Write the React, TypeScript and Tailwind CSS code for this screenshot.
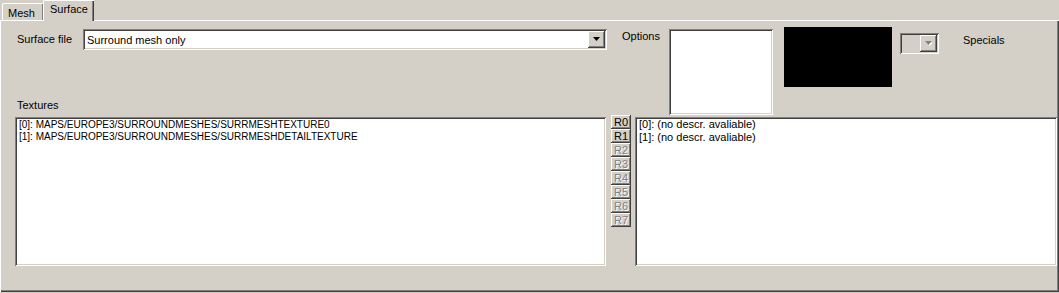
const raised =
  "shadow-[inset_-1px_-1px_#404040,inset_1px_1px_#ffffff,inset_-2px_-2px_#808080,inset_2px_2px_#d4d0c8]";
const sunken =
  "shadow-[inset_1px_1px_#808080,inset_-1px_-1px_#ffffff,inset_2px_2px_#404040,inset_-2px_-2px_#d4d0c8]";

const Arrow = ({ disabled }: { disabled?: boolean }) => (
  <svg width="7" height="5" viewBox="0 0 7 5">
    {disabled && <path d="M1 1h7L4.5 5z" fill="#ffffff" />}
    <path d="M0 0h7L3.5 4z" fill={disabled ? "#808080" : "#000000"} />
  </svg>
);

const textures = [
  "[0]: MAPS/EUROPE3/SURROUNDMESHES/SURRMESHTEXTURE0",
  "[1]: MAPS/EUROPE3/SURROUNDMESHES/SURRMESHDETAILTEXTURE",
];
const descr = ["[0]: (no descr. avaliable)", "[1]: (no descr. avaliable)"];
const regs = ["R0", "R1", "R2", "R3", "R4", "R5", "R6", "R7"];

export default function App() {
  return (
    <div className="w-[1059px] h-[293px] bg-[#d4d0c8] flex flex-col font-['Liberation_Sans',Arial,sans-serif] text-[11px] leading-[13px] text-black">
      {/* tabs */}
      <div className="h-[20px] flex items-end relative z-10">
        <div className="ml-[2px] w-[41px] h-[17px] border-t border-l border-white rounded-tl-[2px] shadow-[inset_-1px_0_#808080] pl-[5px] pt-[3px]">
          Mesh
        </div>
        <div className="w-[51px] h-[21px] -mb-px bg-[#d4d0c8] border-t border-l border-white rounded-tl-[2px] shadow-[inset_-1px_0_#404040,inset_-2px_0_#808080] pl-[6px] pt-[2px]">
          Surface
        </div>
      </div>
      {/* panel */}
      <div className="h-[272px] border-t border-l border-white shadow-[inset_-1px_-1px_#404040,inset_-2px_-2px_#808080] pt-[6px] pl-[14px]">
        <div className="flex h-[89px]">
          <div className="w-[593px] flex flex-col justify-between">
            <div className="flex mt-[2px]">
              <div className="w-[68px] pl-[2px] pt-[4px]">Surface file</div>
              <div className={`w-[524px] h-[21px] bg-white flex items-center justify-between ${sunken}`}>
                <span className="pl-[4px] pt-px">Surround mesh only</span>
                <div className={`w-[17px] h-[17px] mr-[2px] bg-[#d4d0c8] flex items-center justify-center ${raised}`}>
                  <Arrow />
                </div>
              </div>
            </div>
            <div className="pl-[2px] pb-[4px]">Textures</div>
          </div>
          <div className="ml-[14px] w-[47px] mt-[3px]">Options</div>
          <div className={`w-[104px] h-[86px] mt-[2px] bg-white ${sunken}`} />
          <div className="ml-[11px] w-[108px] h-[60px] bg-black" />
          <div className={`ml-[8px] mt-[6px] w-[39px] h-[21px] bg-[#d4d0c8] flex items-center justify-end ${sunken}`}>
            <div className={`w-[17px] h-[17px] mr-[2px] flex items-center justify-center ${raised}`}>
              <Arrow disabled />
            </div>
          </div>
          <div className="ml-[24px] mt-[7px]">Specials</div>
        </div>
        <div className="flex mt-[1px]">
          <div className={`w-[591px] h-[149px] bg-white pl-[4px] pt-[2px] text-[10px] leading-[12px] ${sunken}`}>
            {textures.map((t) => (
              <div key={t}>{t}</div>
            ))}
          </div>
          <div className="ml-[5px] -mt-[2px] flex flex-col">
            {regs.map((r, i) => (
              <div
                key={r}
                className={`w-[20px] h-[14px] flex items-center justify-center text-[11px] leading-[11px] ${raised} ${
                  i < 2 ? "text-black" : "text-[#808080] [text-shadow:1px_1px_#ffffff]"
                }`}
              >
                {r}
              </div>
            ))}
          </div>
          <div className={`ml-[4px] w-[422px] h-[149px] bg-white pl-[4px] pt-[1px] ${sunken}`}>
            {descr.map((t) => (
              <div key={t}>{t}</div>
            ))}
          </div>
        </div>
      </div>
    </div>
  );
}
